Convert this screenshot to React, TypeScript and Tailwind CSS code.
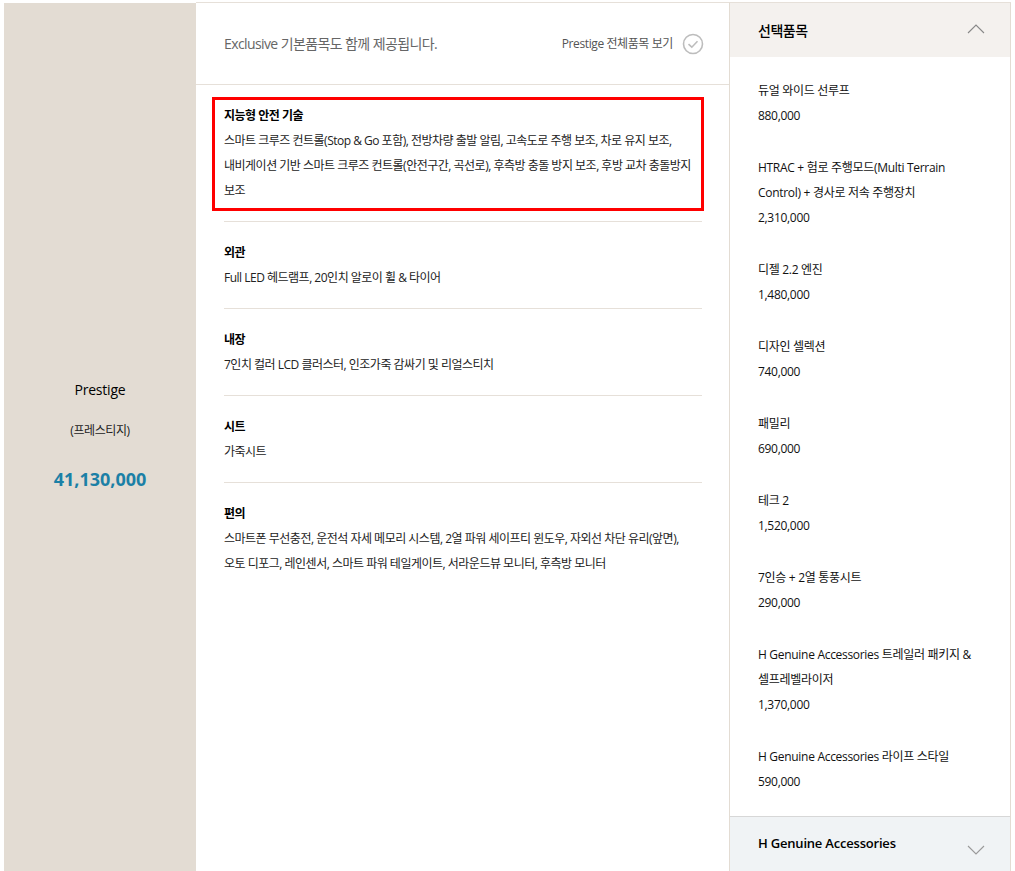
const font = { fontFamily: '"Open Sans", "Noto Sans CJK KR", sans-serif' };

const basics = [
  { title: "외관", lines: ["Full LED 헤드램프, 20인치 알로이 휠 & 타이어"] },
  { title: "내장", lines: ["7인치 컬러 LCD 클러스터, 인조가죽 감싸기 및 리얼스티치"] },
  { title: "시트", lines: ["가죽시트"] },
  {
    title: "편의",
    lines: [
      "스마트폰 무선충전, 운전석 자세 메모리 시스템, 2열 파워 세이프티 윈도우, 자외선 차단 유리(앞면),",
      "오토 디포그, 레인센서, 스마트 파워 테일게이트, 서라운드뷰 모니터, 후측방 모니터",
    ],
  },
];

const options = [
  { name: ["듀얼 와이드 선루프"], price: "880,000" },
  { name: ["HTRAC + 험로 주행모드(Multi Terrain", "Control) + 경사로 저속 주행장치"], price: "2,310,000" },
  { name: ["디젤 2.2 엔진"], price: "1,480,000" },
  { name: ["디자인 셀렉션"], price: "740,000" },
  { name: ["패밀리"], price: "690,000" },
  { name: ["테크 2"], price: "1,520,000" },
  { name: ["7인승 + 2열 통풍시트"], price: "290,000" },
  { name: ["H Genuine Accessories 트레일러 패키지 &", "셀프레벨라이저"], price: "1,370,000" },
  { name: ["H Genuine Accessories 라이프 스타일"], price: "590,000" },
];

function CheckCircle() {
  return (
    <svg width="22" height="22" viewBox="0 0 22 22" fill="none">
      <circle cx="11" cy="11" r="9.5" stroke="#bdbdbd" strokeWidth="1.6" />
      <polyline points="6.5,11.2 9.8,14.2 15.5,8.2" stroke="#bdbdbd" strokeWidth="1.6" fill="none" />
    </svg>
  );
}

function Chevron({ up }: { up?: boolean }) {
  return (
    <svg width="18" height="10" viewBox="0 0 18 10" fill="none">
      <polyline
        points={up ? "1,9 9,1 17,9" : "1,1 9,9 17,1"}
        stroke={up ? "#888" : "#9a9a9a"}
        strokeWidth="1.1"
        fill="none"
      />
    </svg>
  );
}

export default function App() {
  return (
    <div className="h-[871px] overflow-hidden bg-white pt-[2px] pl-[4px] pr-[3px]" style={font}>
      <div className="flex">
        {/* model column */}
        <div className="mt-[1px] w-[192px] shrink-0 bg-[#e3dcd3] flex flex-col items-center pt-[374px] h-[900px]">
          <p className="text-[14px] leading-[26px] text-black tracking-[-0.2px]">Prestige</p>
          <p className="mt-[15px] text-[12px] leading-[26px] text-[#222] tracking-[-0.4px]">(프레스티지)</p>
          <p className="mt-[22px] text-[18px] leading-[26px] font-bold text-[#1b80a6]">41,130,000</p>
        </div>

        {/* basic items */}
        <div className="w-[534px] shrink-0 border-t border-[#e6e0d9] border-r border-r-[#e3dcd3] h-[900px] text-[12px] text-[#222] tracking-[-0.5px] whitespace-nowrap">
          <div className="h-[82px] border-b border-[#e6e0d9] flex items-center pl-[28px] pr-[25px]">
            <p className="text-[14px] text-[#666] tracking-[-0.6px]">Exclusive 기본품목도 함께 제공됩니다.</p>
            <div className="ml-auto flex items-center gap-[9px]">
              <span className="text-[12px] text-[#555] tracking-[-0.4px]">Prestige 전체품목 보기</span>
              <CheckCircle />
            </div>
          </div>

          <div className="pt-[12px]">
            <div className="ml-[16px] mr-[25px] border-[3px] border-[#ff0000] pl-[9px] pt-[3px] pb-[5px] leading-[25px]">
              <p className="font-bold text-black">지능형 안전 기술</p>
              <p>스마트 크루즈 컨트롤(Stop &amp; Go 포함), 전방차량 출발 알림, 고속도로 주행 보조, 차로 유지 보조,</p>
              <p>내비게이션 기반 스마트 크루즈 컨트롤(안전구간, 곡선로), 후측방 충돌 방지 보조, 후방 교차 충돌방지</p>
              <p>보조</p>
            </div>
          </div>

          <div className="mt-[10px] ml-[28px] mr-[27px]">
            {basics.map((b) => (
              <div key={b.title} className="border-t border-[#e6e0d9] pt-[18px] pb-[18px] leading-[25px]">
                <p className="font-bold text-black">{b.title}</p>
                {b.lines.map((l) => (
                  <p key={l}>{l}</p>
                ))}
              </div>
            ))}
          </div>
        </div>

        {/* options */}
        <div className="w-[281px] shrink-0 border-t border-[#e6e0d9] border-r border-r-[#e3dcd3] flex flex-col h-[900px]">
          <div className="h-[54px] bg-[#f4f1ee] flex items-center pl-[28px] pr-[25px]">
            <p className="text-[14px] font-medium text-black tracking-[-0.5px]">선택품목</p>
            <div className="ml-auto -mt-[3px]">
              <Chevron up />
            </div>
          </div>
          <div className="pl-[28px] pr-[10px] pt-[21px] text-[12px] leading-[25px] text-[#111] tracking-[-0.3px] whitespace-nowrap">
            {options.map((o) => (
              <div key={o.price + o.name[0]} className="pb-[27px]">
                {o.name.map((n) => (
                  <p key={n}>{n}</p>
                ))}
                <p>{o.price}</p>
              </div>
            ))}
          </div>
          <div className="mt-[-5px] border-t border-[#d7d7d7] bg-[#f0f3f5] h-[80px] flex items-start pt-[16px] pl-[28px] pr-[25px]">
            <p className="text-[13px] font-semibold text-black leading-[20px] tracking-[-0.2px]">H Genuine Accessories</p>
            <div className="ml-auto mt-[12px]">
              <Chevron />
            </div>
          </div>
        </div>
      </div>
    </div>
  );
}
